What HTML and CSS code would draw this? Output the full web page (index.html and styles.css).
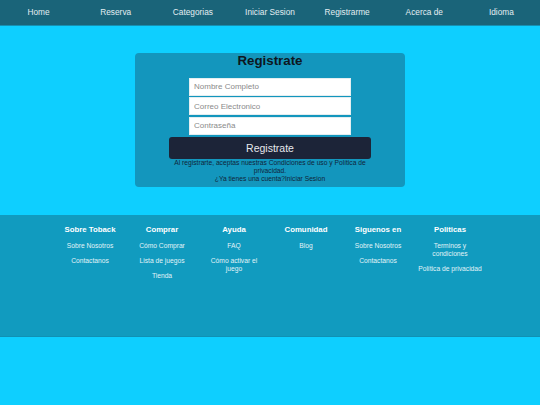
FILE: index.html
```html
<!DOCTYPE html>
<html lang="es">
<head>
<meta charset="utf-8">
<title>Registrate</title>
<link rel="stylesheet" href="styles.css">
</head>
<body>
<nav class="topnav">
  <a class="nav-item" href="#">Home</a>
  <a class="nav-item" href="#">Reserva</a>
  <a class="nav-item" href="#">Categorias</a>
  <a class="nav-item" href="#">Iniciar Sesion</a>
  <a class="nav-item" href="#">Registrarme</a>
  <a class="nav-item" href="#">Acerca de</a>
  <a class="nav-item" href="#">Idioma</a>
</nav>
<main class="main">
  <section class="card">
    <h1 class="card-title">Registrate</h1>
    <form class="form">
      <input class="field" type="text" placeholder="Nombre Completo">
      <input class="field" type="email" placeholder="Correo Electronico">
      <input class="field" type="password" placeholder="Contraseña">
      <button class="btn" type="button">Registrate</button>
      <p class="legal">Al registrarte, aceptas nuestras Condiciones de uso y Política de privacidad.</p>
      <p class="legal">¿Ya tienes una cuenta?Iniciar Sesion</p>
    </form>
  </section>
</main>
<footer class="footer">
  <div class="footer-grid">
    <div class="fcol">
      <h3 class="fhead">Sobre Toback</h3>
      <a class="flink" href="#">Sobre Nosotros</a>
      <a class="flink" href="#">Contactanos</a>
    </div>
    <div class="fcol">
      <h3 class="fhead">Comprar</h3>
      <a class="flink" href="#">Cómo Comprar</a>
      <a class="flink" href="#">Lista de juegos</a>
      <a class="flink" href="#">Tienda</a>
    </div>
    <div class="fcol">
      <h3 class="fhead">Ayuda</h3>
      <a class="flink" href="#">FAQ</a>
      <a class="flink flink-narrow" href="#">Cómo activar el juego</a>
    </div>
    <div class="fcol">
      <h3 class="fhead">Comunidad</h3>
      <a class="flink" href="#">Blog</a>
    </div>
    <div class="fcol">
      <h3 class="fhead">Siguenos en</h3>
      <a class="flink" href="#">Sobre Nosotros</a>
      <a class="flink" href="#">Contactanos</a>
    </div>
    <div class="fcol">
      <h3 class="fhead">Politicas</h3>
      <a class="flink flink-narrow" href="#">Terminos y condiciones</a>
      <a class="flink" href="#">Política de privacidad</a>
    </div>
  </div>
</footer>
</body>
</html>
```
FILE: styles.css
```css
* { box-sizing: border-box; }
html, body { margin: 0; padding: 0; }
body {
  background: #0ecfff;
  font-family: "Liberation Sans", Arial, sans-serif;
}
a { text-decoration: none; color: inherit; }

.topnav {
  display: flex;
  height: 26px;
  background: #1a6479;
  border-bottom: 1px solid #1690b2;
}
.nav-item {
  flex: 1;
  text-align: center;
  font-size: 8.3px;
  line-height: 25px;
  color: #e4eef2;
}

.main {
  padding: 27px 0 28px;
}
.card {
  width: 270px;
  height: 134px;
  margin: 0 auto;
  background: #1396bd;
  border-radius: 4px;
  display: flex;
  flex-direction: column;
  align-items: center;
}
.card-title {
  margin: 0;
  font-size: 13.3px;
  line-height: 16px;
  font-weight: bold;
  color: #0d1620;
}
.form {
  margin-top: 8.7px;
  width: 202px;
  display: flex;
  flex-direction: column;
  align-items: center;
}
.field {
  width: 162px;
  height: 18px;
  margin: 0 0 1.5px;
  padding: 0 4px;
  border: 1px solid #e3eef1;
  background: #ffffff;
  font-family: "Liberation Sans", Arial, sans-serif;
  font-size: 8px;
  color: #222;
  outline: none;
}
.field::placeholder { color: #8a8a8a; }
.btn {
  width: 202px;
  height: 22px;
  margin-top: 1px;
  border: none;
  border-radius: 3px;
  background: #1c2438;
  color: #e6e8ec;
  font-family: "Liberation Sans", Arial, sans-serif;
  font-size: 10.5px;
  padding: 0;
}
.legal {
  margin: 0;
  font-size: 6.7px;
  line-height: 7.7px;
  text-align: center;
  color: #10253a;
}

.footer {
  height: 122px;
  background: #119bbf;
  border-bottom: 1px solid #0f91b5;
  padding-top: 10px;
}
.footer-grid {
  width: 432px;
  margin: 0 auto;
  display: grid;
  grid-template-columns: repeat(6, 1fr);
}
.fcol {
  display: flex;
  flex-direction: column;
  align-items: center;
  padding: 0 1.5px;
  text-align: center;
}
.fhead {
  margin: 0 0 6.7px;
  font-size: 7.8px;
  line-height: 10px;
  font-weight: bold;
  color: #ffffff;
}
.flink {
  font-size: 6.7px;
  line-height: 8px;
  color: #e2f3f8;
  margin-bottom: 7.3px;
}
.flink-narrow {
  max-width: 56px;
}
```
